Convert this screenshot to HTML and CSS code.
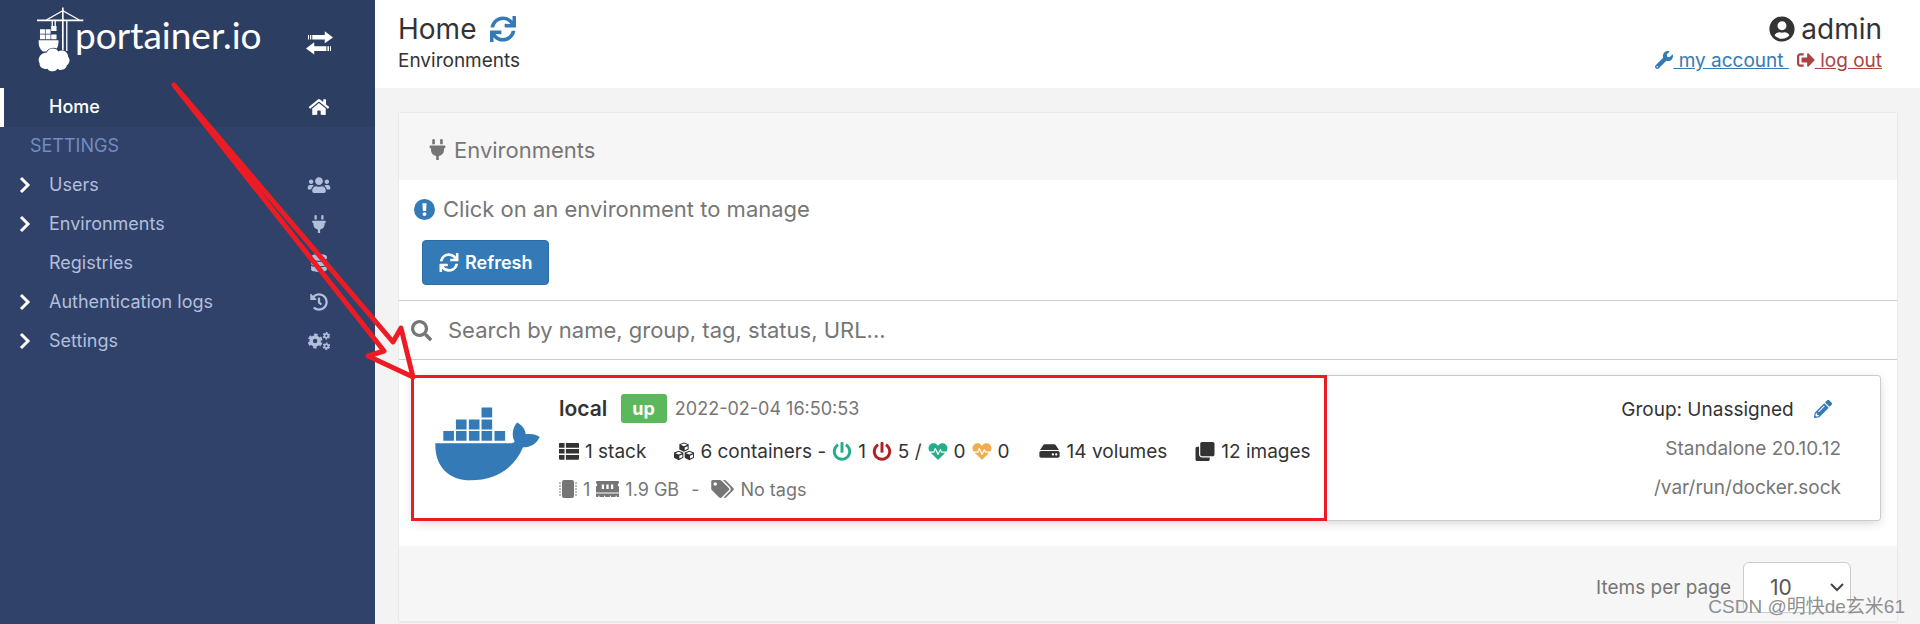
FILE: index.html
```
<!DOCTYPE html>
<html lang="en">
<head>
    <meta charset="UTF-8">
    <meta name="viewport" content="width=device-width, initial-scale=1.0">
    <title>Portainer</title>
    <link rel="stylesheet" href="styles.css">
</head>
<body>
    <!-- Icon set -->
    <svg class="icon-defs" aria-hidden="true">
        <symbol id="i-toggle" viewBox="0 0 82 72">
            <path d="M6 12h3v13H6zM12 12h4v13h-4zM19 12h38V0l25 19-25 18V25H19zM76 46h-3v14h3zM70 46h-5v14h5zM62 46H25V34L0 53l25 18V60h37z"/>
        </symbol>
        <symbol id="i-home" viewBox="0 0 576 512">
            <path d="M280.37 148.26L96 300.11V464a16 16 0 0 0 16 16l112.06-.29a16 16 0 0 0 15.92-16V368a16 16 0 0 1 16-16h64a16 16 0 0 1 16 16v95.64a16 16 0 0 0 16 16.05L464 480a16 16 0 0 0 16-16V300L295.67 148.26a12.19 12.19 0 0 0-15.3 0zM571.6 251.47L488 182.56V44.05a12 12 0 0 0-12-12h-56a12 12 0 0 0-12 12v72.61L318.47 43a48 48 0 0 0-61 0L4.34 251.47a12 12 0 0 0-1.6 16.9l25.5 31A12 12 0 0 0 45.15 301l235.22-193.74a12.19 12.19 0 0 1 15.3 0L530.9 301a12 12 0 0 0 16.9-1.6l25.5-31a12 12 0 0 0-1.7-16.93z"/>
        </symbol>
        <symbol id="i-users" viewBox="0 0 640 512">
            <path d="M96 224c35.3 0 64-28.7 64-64s-28.7-64-64-64-64 28.7-64 64 28.7 64 64 64zm448 0c35.3 0 64-28.7 64-64s-28.7-64-64-64-64 28.7-64 64 28.7 64 64 64zm32 32h-64c-17.6 0-33.5 7.1-45.1 18.6 40.3 22.1 68.9 62 75.1 109.4h66c17.7 0 32-14.3 32-32v-32c0-35.3-28.7-64-64-64zm-256 0c61.9 0 112-50.1 112-112S381.9 32 320 32 208 82.1 208 144s50.1 112 112 112zm76.8 32h-8.3c-20.8 10-43.9 16-68.5 16s-47.6-6-68.5-16h-8.3C179.6 288 128 339.6 128 403.2V432c0 26.5 21.5 48 48 48h288c26.5 0 48-21.5 48-48v-28.8c0-63.6-51.6-115.2-115.2-115.2zm-223.7-13.4C161.5 263.1 145.6 256 128 256H64c-35.3 0-64 28.7-64 64v32c0 17.7 14.3 32 32 32h65.9c6.3-47.4 34.9-87.3 75.2-109.4z"/>
        </symbol>
        <symbol id="i-plug" viewBox="0 0 384 512">
            <path d="M320 32a32 32 0 0 0-64 0v96h64zm48 128H16a16 16 0 0 0-16 16v32a16 16 0 0 0 16 16h16v32a160.07 160.07 0 0 0 128 156.8V512h64v-99.2A160.07 160.07 0 0 0 352 256v-32h16a16 16 0 0 0 16-16v-32a16 16 0 0 0-16-16zM128 32a32 32 0 0 0-64 0v96h64z"/>
        </symbol>
        <symbol id="i-database" viewBox="0 0 448 512">
            <path d="M448 73.143v45.714C448 159.143 347.667 192 224 192S0 159.143 0 118.857V73.143C0 32.857 100.333 0 224 0s224 32.857 224 73.143zM448 176v102.857C448 319.143 347.667 352 224 352S0 319.143 0 278.857V176c48.125 33.143 136.208 48.572 224 48.572S399.874 209.143 448 176zm0 160v102.857C448 479.143 347.667 512 224 512S0 479.143 0 438.857V336c48.125 33.143 136.208 48.572 224 48.572S399.874 369.143 448 336z"/>
        </symbol>
        <symbol id="i-history" viewBox="0 0 512 512">
            <path d="M504 255.531c.253 136.64-111.18 248.372-247.82 248.468-59.015.042-113.223-20.53-155.822-54.911-11.077-8.94-11.905-25.541-1.839-35.607l11.267-11.267c8.609-8.609 22.353-9.551 31.891-1.984C173.062 425.135 212.781 440 256 440c101.705 0 184-82.311 184-184 0-101.705-82.311-184-184-184-48.814 0-93.149 18.969-126.068 49.932l50.754 50.754c10.08 10.08 2.941 27.314-11.313 27.314H24c-8.837 0-16-7.163-16-16V38.627c0-14.254 17.234-21.393 27.314-11.314l49.372 49.372C129.209 34.136 189.552 8 256 8c136.81 0 247.747 110.78 248 247.531zm-180.912 78.784l9.823-12.63c8.138-10.463 6.253-25.542-4.21-33.679L288 256.349V152c0-13.255-10.745-24-24-24h-16c-13.255 0-24 10.745-24 24v135.651l65.409 50.874c10.463 8.137 25.541 6.253 33.679-4.21z"/>
        </symbol>
        <symbol id="i-cogs" viewBox="0 0 640 512">
            <g fill="none" stroke="currentColor">
                <circle cx="210" cy="256" r="115" stroke-width="100"/>
                <circle cx="210" cy="256" r="180" stroke-width="60" stroke-dasharray="100 88.5" stroke-dashoffset="-44"/>
                <circle cx="530" cy="108" r="54" stroke-width="46"/>
                <circle cx="530" cy="108" r="88" stroke-width="40" stroke-dasharray="52 40" stroke-dashoffset="-20"/>
                <circle cx="530" cy="404" r="54" stroke-width="46"/>
                <circle cx="530" cy="404" r="88" stroke-width="40" stroke-dasharray="52 40" stroke-dashoffset="-20"/>
            </g>
        </symbol>
        <symbol id="i-chevron" viewBox="0 0 12 18">
            <path d="M2 2l7 7-7 7" fill="none" stroke="currentColor" stroke-width="3"/>
        </symbol>
        <symbol id="i-sync" viewBox="0 0 512 512">
            <path d="M440.65 12.57l4 82.77A247.16 247.16 0 0 0 255.83 8C134.73 8 33.91 94.92 12.29 209.82A12 12 0 0 0 24.09 224h49.05a12 12 0 0 0 11.67-9.26 175.91 175.91 0 0 1 317-56.94l-101.46-4.86a12 12 0 0 0-12.57 12v47.41a12 12 0 0 0 12 12H500a12 12 0 0 0 12-12V12a12 12 0 0 0-12-12h-47.37a12 12 0 0 0-11.98 12.57zM255.83 432a175.61 175.61 0 0 1-146-77.8l101.8 4.87a12 12 0 0 0 12.57-12v-47.4a12 12 0 0 0-12-12H12a12 12 0 0 0-12 12V500a12 12 0 0 0 12 12h47.35a12 12 0 0 0 12-12.6l-4.15-82.57A247.17 247.17 0 0 0 255.83 504c121.11 0 221.93-86.92 243.55-201.82a12 12 0 0 0-11.8-14.18h-49.05a12 12 0 0 0-11.67 9.26A175.86 175.86 0 0 1 255.83 432z"/>
        </symbol>
        <symbol id="i-user" viewBox="0 0 496 512">
            <path d="M248 8C111 8 0 119 0 256s111 248 248 248 248-111 248-248S385 8 248 8zm0 96c48.6 0 88 39.4 88 88s-39.4 88-88 88-88-39.4-88-88 39.4-88 88-88zm0 344c-58.7 0-111.3-26.6-146.5-68.2 18.8-35.4 55.6-59.8 98.5-59.8 2.4 0 4.8.4 7.1 1.1 13 4.2 26.6 6.9 40.9 6.9 14.3 0 28-2.7 40.9-6.9 2.3-.7 4.7-1.1 7.1-1.1 42.9 0 79.7 24.4 98.5 59.8C359.3 421.4 306.7 448 248 448z"/>
        </symbol>
        <symbol id="i-wrench" viewBox="0 0 512 512">
            <path d="M507.73 109.1c-2.24-9.03-13.54-12.09-20.12-5.51l-74.36 74.36-67.88-11.31-11.31-67.88 74.36-74.36c6.62-6.62 3.43-17.9-5.66-20.16-47.38-11.74-99.55.91-136.58 37.93-39.64 39.64-50.55 97.1-34.05 147.2L18.74 402.76c-24.99 24.99-24.99 65.51 0 90.5 24.99 24.99 65.51 24.99 90.5 0l213.21-213.21c50.12 16.71 107.47 5.68 147.37-34.22 37.07-37.07 49.7-89.32 37.91-136.73zM64 472c-13.25 0-24-10.75-24-24 0-13.26 10.75-24 24-24s24 10.74 24 24c0 13.25-10.75 24-24 24z"/>
        </symbol>
        <symbol id="i-logout" viewBox="0 0 512 512">
            <path d="M497 273L329 441c-15 15-41 4.5-41-17v-96H152c-13.3 0-24-10.7-24-24v-96c0-13.3 10.7-24 24-24h136V88c0-21.4 25.9-32 41-17l168 168c9.3 9.4 9.3 24.6 0 34zM192 436v-40c0-6.6-5.4-12-12-12H96c-17.7 0-32-14.3-32-32V160c0-17.7 14.3-32 32-32h84c6.6 0 12-5.4 12-12V76c0-6.6-5.4-12-12-12H96c-53 0-96 43-96 96v192c0 53 43 96 96 96h84c6.6 0 12-5.4 12-12z"/>
        </symbol>
        <symbol id="i-info" viewBox="0 0 20 20">
            <path fill-rule="evenodd" d="M10 0a10 10 0 1 0 0 20 10 10 0 0 0 0-20zM8 4h4l-.5 7.500h-3zM10 12.500a1.900 1.900 0 1 1 0 3.800 1.900 1.900 0 0 1 0-3.800z"/>
        </symbol>
        <symbol id="i-search" viewBox="0 0 512 512">
            <path d="M505 442.7L405.3 343c-4.500-4.500-10.600-7-17-7H372c27.600-35.300 44-79.700 44-128C416 93.100 322.900 0 208 0S0 93.100 0 208s93.100 208 208 208c48.300 0 92.700-16.400 128-44v16.300c0 6.400 2.500 12.500 7 17l99.700 99.700c9.400 9.400 24.600 9.400 33.900 0l28.300-28.300c9.400-9.400 9.400-24.600.1-34zM208 336c-70.700 0-128-57.200-128-128 0-70.700 57.200-128 128-128 70.700 0 128 57.200 128 128 0 70.700-57.200 128-128 128z"/>
        </symbol>
        <symbol id="i-list" viewBox="0 0 58 50">
            <path d="M2 0h14v14H0V2zM20 0h36l2 2v12H20zM0 18h16v13H0zM20 18h38v13H20zM0 35h16v14H2l-2-2zM20 35h38v12l-2 2H20z"/>
        </symbol>
        <symbol id="i-cubes" viewBox="0 0 60 54">
            <path d="M30 0l14 5v16l-14 7-14-7V5zM14 25l14 5v16l-14 7-14-7V30zM46 25l14 5v16l-14 7-14-7V30z"/>
            <path d="M30 3l10 4-10 4-10-4zM14 28l10 4-10 4-10-4zM46 28l10 4-10 4-10-4zM32 15l9-4v8l-9 4zM16 40l9-4v8l-9 4zM48 40l9-4v8l-9 4z" fill="#fff"/>
        </symbol>
        <symbol id="i-power" viewBox="0 0 512 512">
            <path d="M400 54.100c63 45 104 118.600 104 201.900 0 136.800-110.800 247.700-247.500 248C120 504.300 8.200 393 8 256.400 7.900 173.100 48.900 99.300 111.800 54.200c11.700-8.300 28-4.800 35 7.700L162.600 90c5.900 10.500 3.100 23.800-6.600 31-41.500 30.800-68 79.600-68 134.900-.1 92.300 74.500 168.100 168 168.100 91.600 0 168.600-74.200 168-169.100-.3-51.800-24.700-101.800-68.100-134-9.700-7.200-12.400-20.500-6.500-30.900l15.800-28.100c7-12.400 23.200-16.100 34.800-7.800zM296 264V24c0-13.300-10.700-24-24-24h-32c-13.300 0-24 10.700-24 24v240c0 13.300 10.700 24 24 24h32c13.300 0 24-10.700 24-24z"/>
        </symbol>
        <symbol id="i-heart" viewBox="0 0 512 512">
            <path d="M320.2 243.8l-49.7 99.4c-6 12.1-23.4 11.7-28.9-.6l-56.9-126.3-30 71.7H60.6l182.5 186.5c7.1 7.3 18.6 7.3 25.7 0L451.4 288H342.3l-22.1-44.2zM473.7 73.9l-2.4-2.5c-51.5-52.6-135.8-52.6-187.4 0L256 100l-27.9-28.5c-51.5-52.7-135.9-52.7-187.4 0l-2.4 2.4C-10.4 123.7-12.5 203 31 256h102.4l35.9-86.2c5.4-12.9 23.6-13.1 29.3-.4l58.2 129.3 49-97.9c5.9-11.8 22.7-11.8 28.6 0l27.6 55.2H481c43.5-53 41.4-132.3-7.3-182.1z"/>
        </symbol>
        <symbol id="i-hdd" viewBox="0 0 576 512">
            <path d="M576 304v96c0 26.51-21.49 48-48 48H48c-26.51 0-48-21.49-48-48v-96c0-26.51 21.49-48 48-48h480c26.51 0 48 21.49 48 48zm-48-80a79.557 79.557 0 0 1 30.777 6.165L462.25 85.374A48.003 48.003 0 0 0 422.311 64H153.689a48 48 0 0 0-39.938 21.374L17.223 230.165A79.557 79.557 0 0 1 48 224h480zm-48 96c-17.673 0-32 14.327-32 32s14.327 32 32 32 32-14.327 32-32-14.327-32-32-32zm-96 0c-17.673 0-32 14.327-32 32s14.327 32 32 32 32-14.327 32-32-14.327-32-32-32z"/>
        </symbol>
        <symbol id="i-clone" viewBox="0 0 512 512">
            <path d="M464 0c26.51 0 48 21.49 48 48v288c0 26.51-21.49 48-48 48H176c-26.51 0-48-21.49-48-48V48c0-26.51 21.49-48 48-48h288M176 416c-44.112 0-80-35.888-80-80V128H48c-26.51 0-48 21.49-48 48v288c0 26.51 21.49 48 48 48h288c26.51 0 48-21.49 48-48v-48H176z"/>
        </symbol>
        <symbol id="i-chip" viewBox="0 0 18 18">
            <path d="M5 0h8a2 2 0 0 1 2 2v14a2 2 0 0 1-2 2H5a2 2 0 0 1-2-2V2a2 2 0 0 1 2-2z"/>
            <path d="M0 3h2M0 6h2M0 9h2M0 12h2M0 15h2M16 3h2M16 6h2M16 9h2M16 12h2M16 15h2" stroke="currentColor" stroke-width="1"/>
        </symbol>
        <symbol id="i-memory" viewBox="0 0 640 448">
            <path d="M640 67v-35c0-18-14-32-32-32H32C14 0 0 14 0 32v35c19 7 32 24 32 45s-13 38-32 45v163h640V157c-19-7-32-24-32-45s13-38 32-45zM224 224h-64V96h64zm128 0h-64V96h64zm128 0h-64V96h64zM0 448h64v-27a16 16 0 0 1 32 0v27h128v-27a16 16 0 0 1 32 0v27h128v-27a16 16 0 0 1 32 0v27h128v-27a16 16 0 0 1 32 0v27h64v-96H0z"/>
        </symbol>
        <symbol id="i-tags" viewBox="0 0 640 512">
            <path d="M497.941 225.941L286.059 14.059A48 48 0 0 0 252.118 0H48C21.49 0 0 21.49 0 48v204.118a48 48 0 0 0 14.059 33.941l211.882 211.882c18.744 18.745 49.136 18.746 67.882 0l204.118-204.118c18.745-18.745 18.745-49.137 0-67.882zM112 160c-26.51 0-48-21.49-48-48s21.49-48 48-48 48 21.49 48 48-21.49 48-48 48zm513.941 133.823L421.823 497.941c-18.745 18.745-49.137 18.745-67.882 0l-.36-.36L527.64 323.522c16.999-16.999 26.36-39.6 26.36-63.64s-9.362-46.641-26.36-63.64L331.397 0h48.721a48 48 0 0 1 33.941 14.059l211.882 211.882c18.745 18.745 18.745 49.137 0 67.882z"/>
        </symbol>
        <symbol id="i-pencil" viewBox="0 0 512 512">
            <path d="M497.9 142.1l-46.1 46.1c-4.7 4.7-12.3 4.7-17 0l-111-111c-4.7-4.7-4.7-12.3 0-17l46.1-46.1c18.7-18.7 49.1-18.7 67.900 0l60.1 60.1c18.8 18.7 18.8 49.1 0 67.9zM284.2 99.8L21.6 362.4.4 483.9c-2.9 16.4 11.4 30.6 27.800 27.800l121.5-21.3 262.6-262.6c4.7-4.7 4.7-12.3 0-17l-111-111c-4.8-4.7-12.4-4.7-17.1 0zM124.1 339.9c-5.5-5.5-5.5-14.3 0-19.8l154-154c5.5-5.5 14.3-5.5 19.8 0s5.5 14.3 0 19.8l-154 154c-5.5 5.5-14.3 5.5-19.8 0zM88 424h48v36.3l-64.5 11.3-31.1-31.1L51.7 376H88v48z"/>
        </symbol>
    </svg>

    <div class="page">
        <nav class="sidebar">
            <div class="sidebar-header">
                <a class="logo" href="#">
                    <svg class="logo-crane" viewBox="0 0 142 194" aria-hidden="true">
                        <g fill="none" stroke="#fff" stroke-width="5">
                            <path d="M78 0v130M0 39h140"/>
                            <path d="M28 38L78 10l50 28M90 40v92M55 40v20M46 40v24" stroke-width="4"/>
                        </g>
                        <path d="M43 56h16v15H43zM9 66h15v14H9zM26 66h15v14H26zM9 82h15v14H9zM26 82h15v14H26zM43 82h16v14H43zM5 99h60c0 20-4 26-14 34H18C8 126 4 115 5 99z"/>
                        <path d="M30 136c4-14 28-16 34-3 14-8 30 0 30 16 8 8 4 22-4 26-2 14-20 18-28 10-8 12-26 10-30 0-14 4-26-6-24-16-8-12 0-32 22-33z" stroke="#2d3e63" stroke-width="4" paint-order="stroke"/>
                    </svg>
                    <span class="logo-text">portainer.io</span>
                </a>
                <button class="toggle" type="button" aria-label="Toggle sidebar"><svg class="icon-toggle"><use href="#i-toggle"/></svg></button>
            </div>
            <ul class="menu">
                <li class="active"><a href="#">Home<svg class="icon"><use href="#i-home"/></svg></a></li>
                <li class="title">SETTINGS</li>
                <li><svg class="chevron"><use href="#i-chevron"/></svg><a href="#">Users<svg class="icon"><use href="#i-users"/></svg></a></li>
                <li><svg class="chevron"><use href="#i-chevron"/></svg><a href="#">Environments<svg class="icon"><use href="#i-plug"/></svg></a></li>
                <li><a href="#">Registries<svg class="icon"><use href="#i-database"/></svg></a></li>
                <li><svg class="chevron"><use href="#i-chevron"/></svg><a href="#">Authentication logs<svg class="icon"><use href="#i-history"/></svg></a></li>
                <li><svg class="chevron"><use href="#i-chevron"/></svg><a href="#">Settings<svg class="icon"><use href="#i-cogs"/></svg></a></li>
            </ul>
        </nav>

        <main class="content">
            <header class="header">
                <div>
                    <h1>Home <a href="#" aria-label="Reload"><svg class="icon-lg"><use href="#i-sync"/></svg></a></h1>
                    <div class="breadcrumb">Environments</div>
                </div>
                <div class="user-box">
                    <div class="user-name"><svg class="icon-lg"><use href="#i-user"/></svg>admin</div>
                    <div class="user-links">
                        <a class="account" href="#"><svg class="icon"><use href="#i-wrench"/></svg>&nbsp;my account&nbsp;</a>
                        <a class="logout" href="#"><svg class="icon"><use href="#i-logout"/></svg>&nbsp;log out</a>
                    </div>
                </div>
            </header>

            <section class="widget">
                <h2 class="widget-header"><svg class="icon-md"><use href="#i-plug"/></svg>Environments</h2>
                <div class="actions">
                    <p class="hint"><svg class="icon-md"><use href="#i-info"/></svg>Click on an environment to manage</p>
                    <button class="btn" type="button"><svg class="icon"><use href="#i-sync"/></svg>Refresh</button>
                </div>
                <div class="search">
                    <label for="search"><svg class="icon-md"><use href="#i-search"/></svg></label>
                    <input type="text" id="search" aria-label="Search" placeholder="Search by name, group, tag, status, URL...">
                </div>
                <div class="list">
                    <div class="env">
                        <svg class="docker" viewBox="0 0 316 220" aria-hidden="true">
                            <path d="M140 0h32v30h-32zM63 36h32v30H63zM102 36h32v30h-32zM140 36h32v30h-32zM25 71h32v29H25zM63 71h32v29H63zM102 71h32v29h-32zM140 71h32v29h-32zM179 71h32v29h-32z"/>
                            <path d="M1 108h222c7 0 13-2 17-5-11-19-6-43 7-58 15 8 25 20 26 36 16-3 32 0 42 8-9 20-27 31-50 31-26 62-82 99-158 99-66 0-108-42-106-111z"/>
                        </svg>
                        <div class="env-main">
                            <div class="row">
                                <strong class="env-name">local</strong>
                                <span class="label">up</span>
                                <span class="muted">2022-02-04 16:50:53</span>
                            </div>
                            <div class="row stats">
                                <span class="stat"><svg class="icon"><use href="#i-list"/></svg>1 stack</span>
                                <span class="stat">
                                    <svg class="icon"><use href="#i-cubes"/></svg>6 containers -
                                    <svg class="icon green"><use href="#i-power"/></svg>1
                                    <svg class="icon red"><use href="#i-power"/></svg>5 /
                                    <svg class="icon green"><use href="#i-heart"/></svg>0
                                    <svg class="icon orange"><use href="#i-heart"/></svg>0
                                </span>
                                <span class="stat"><svg class="icon-wide"><use href="#i-hdd"/></svg>14 volumes</span>
                                <span class="stat"><svg class="icon"><use href="#i-clone"/></svg>12 images</span>
                            </div>
                            <div class="row specs muted">
                                <span class="stat"><svg class="icon-chip"><use href="#i-chip"/></svg>1 <svg class="icon-wide"><use href="#i-memory"/></svg>1.9 GB</span>
                                <span class="dash">-</span>
                                <span class="stat"><svg class="icon-wide"><use href="#i-tags"/></svg>No tags</span>
                            </div>
                        </div>
                        <div class="env-side">
                            <div class="group">Group: Unassigned <a href="#" aria-label="Edit"><svg class="icon"><use href="#i-pencil"/></svg></a></div>
                            <div class="muted">Standalone 20.10.12</div>
                            <div class="muted">/var/run/docker.sock</div>
                        </div>
                        <div class="highlight"></div>
                    </div>
                </div>
                <footer class="footer">
                    <label for="limit">Items per page</label>
                    <span class="select-wrap">
                        <select id="limit">
                            <option>10</option>
                            <option>25</option>
                            <option>50</option>
                        </select>
                        <svg class="caret" viewBox="0 0 14 9" aria-hidden="true"><path d="M1 1l6 6 6-6"/></svg>
                    </span>
                </footer>
            </section>
        </main>
    </div>

    <!-- Arrow drawn over the page -->
    <svg class="arrow" viewBox="0 0 420 400" aria-hidden="true">
        <path d="M174 85L384 351l-16 5 45 21-12-49-8 14z"/>
    </svg>
    <div class="watermark">CSDN @明快de玄米61</div>
</body>
</html>
```
FILE: styles.css
```
* {
    box-sizing: border-box;
}
body {
    margin: 0;
    font-family: Inter, "Noto Sans CJK SC", sans-serif;
    font-size: 18px;
    color: #333;
    background-color: #f3f3f3;
}
a {
    color: #337ab7;
}
svg {
    fill: currentColor;
    flex: none;
}
.icon-defs {
    display: none;
}
.icon {
    width: 20px;
    height: 19px;
}
.icon-chip {
    width: 18px;
    height: 18px;
}
.icon-wide {
    width: 23px;
    height: 18px;
}
.icon-md {
    width: 21px;
    height: 21px;
}
.icon-lg {
    width: 26px;
    height: 26px;
}
.page {
    display: flex;
    min-height: 100vh;
}

/* Sidebar */
.sidebar {
    width: 375px;
    flex: none;
    background-color: #30426a;
}
.sidebar-header {
    display: flex;
    justify-content: space-between;
    height: 88px;
    padding: 7px 42px 0 37px;
    background-color: #2d3e63;
}
.logo {
    display: flex;
    color: #fff;
    text-decoration: none;
}
.logo-crane {
    width: 47px;
    height: 65px;
}
.logo-text {
    margin: 6px 0 0 -9px;
    font-family: Lato, sans-serif;
    font-size: 37px;
    line-height: 44px;
}
.toggle {
    padding: 0 0 9px;
    align-self: center;
    border: 0;
    background: none;
    color: #fff;
}
.icon-toggle {
    display: block;
    width: 27px;
    height: 24px;
}
.menu {
    list-style-type: none;
    margin: 0;
    padding: 0;
}
.menu li {
    display: flex;
    align-items: center;
    height: 39px;
    padding: 0 0 2px 19px;
}
.menu a {
    display: flex;
    flex: 1;
    justify-content: space-between;
    align-items: center;
    padding-right: 44px;
    color: #b2bfdc;
    text-decoration: none;
}
.menu li > a:first-child {
    padding-left: 30px;
}
.menu .icon {
    width: 24px;
    height: 18px;
}
.menu .active {
    padding-left: 15px;
    border-left: 4px solid #fff;
    background-color: #2d3e63;
}
.menu .active a {
    color: #fff;
    font-weight: 500;
}
.menu .title {
    padding-left: 30px;
    color: #738bc0;
}
.chevron {
    width: 12px;
    height: 18px;
    margin-right: 18px;
    color: #fff;
}

/* Top bar */
.content {
    flex: 1;
    min-width: 0;
}
.header {
    display: flex;
    justify-content: space-between;
    height: 88px;
    padding: 11px 38px 0 23px;
    font-size: 19px;
    background-color: #fff;
}
h1,
.user-name {
    display: flex;
    align-items: center;
    gap: 6px;
    height: 36px;
    margin: 0;
    font-size: 28px;
    font-weight: 400;
}
h1 {
    gap: 14px;
}
h1 a {
    display: flex;
}
.user-name {
    justify-content: flex-end;
}
.breadcrumb,
.user-links {
    line-height: 28px;
}
.user-links .icon {
    width: 18px;
    height: 18px;
    vertical-align: -2px;
}
.user-links {
    display: flex;
    gap: 8px;
}
.logout {
    color: #a94442;
}

/* Environments widget */
.widget {
    margin: 24px 22px 0 23px;
    border: 1px solid #e9e9e9;
    border-bottom-width: 2px;
    border-radius: 3px;
    background-color: #fff;
}
.widget-header {
    display: flex;
    align-items: center;
    gap: 6px;
    height: 67px;
    margin: 0;
    padding: 6px 28px 0;
    font-size: 22px;
    font-weight: 400;
    color: #767676;
    background-color: #f6f6f6;
}
.actions {
    padding: 15px 15px 15px;
}
.hint {
    display: flex;
    align-items: center;
    gap: 8px;
    height: 28px;
    margin: 0 0 17px;
    font-size: 22px;
    color: #767676;
}
.hint svg {
    color: #337ab7;
}
.btn {
    display: flex;
    align-items: center;
    gap: 6px;
    height: 45px;
    margin-left: 8px;
    padding: 0 16px;
    border: 1px solid #2e6da4;
    border-radius: 4px;
    font: 600 18px Inter, sans-serif;
    color: #fff;
    background-color: #337ab7;
}
.search {
    display: flex;
    align-items: center;
    height: 60px;
    padding: 0 12px;
    border: 1px solid #ccc;
    border-width: 1px 0;
    color: #767676;
}
.search label {
    display: flex;
    width: 37px;
}
.search input {
    flex: 1;
    padding: 0;
    border: 0;
    font: 22px Inter, sans-serif;
}
.search input::placeholder {
    color: #767676;
}
.list {
    padding: 15px 16px 25px 13px;
}
.env {
    position: relative;
    display: flex;
    height: 146px;
    padding: 14px 39px 0 22px;
    border: 1px solid #ccc;
    border-radius: 3px;
    box-shadow: 0 3px 12px -2px rgba(0, 0, 0, 0.2);
}
.docker {
    width: 105px;
    height: 74px;
    margin: 17px 19px 0 0;
    color: #337ab7;
}
.env-main {
    flex: 1;
}
.row {
    display: flex;
    align-items: center;
    height: 36px;
}
.stats {
    gap: 28px;
    height: 50px;
    font-size: 19px;
}
.specs {
    height: 26px;
}
.stat {
    display: flex;
    align-items: center;
    gap: 6px;
}
.env-name {
    margin-right: 14px;
    font-size: 21px;
    font-weight: 600;
}
.label {
    margin-right: 8px;
    padding: 0 12px 0 11px;
    border-radius: 3px;
    font-weight: 700;
    line-height: 29px;
    color: #fff;
    background-color: #5cb85c;
}
.muted {
    color: #767676;
}
.dash {
    margin: 0 12px;
}
.green {
    color: #23ae89;
}
.red {
    color: #ae2323;
}
.orange {
    color: #f0ad4e;
}
.env-side {
    font-size: 19px;
    line-height: 39px;
    text-align: right;
}
.group {
    margin-right: 8px;
}
.group svg {
    height: 18px;
    margin-left: 14px;
    vertical-align: -2px;
}
.highlight {
    position: absolute;
    top: -1px;
    bottom: -1px;
    left: -2px;
    width: 916px;
    border: 3px solid #ed1c24;
}
.footer {
    display: flex;
    align-items: center;
    justify-content: flex-end;
    gap: 12px;
    height: 75px;
    padding: 8px 46px 0 0;
    font-size: 19px;
    color: #767676;
    background-color: #f6f6f6;
}
.select-wrap {
    position: relative;
}
.footer select {
    display: block;
    width: 108px;
    height: 51px;
    padding: 0 0 0 26px;
    border: 1px solid #ccc;
    border-radius: 6px;
    appearance: none;
    font: 21px Inter, sans-serif;
    color: #555;
    background-color: #fff;
}
.caret {
    position: absolute;
    top: 21px;
    right: 7px;
    width: 14px;
    height: 9px;
    fill: none;
    stroke: #444;
    stroke-width: 2px;
    pointer-events: none;
}

/* Overlays */
.arrow {
    position: absolute;
    top: 0;
    left: 0;
    width: 420px;
    height: 400px;
    pointer-events: none;
}
.arrow path {
    fill: none;
    stroke: #ed1c24;
    stroke-width: 5;
    stroke-linejoin: round;
}
.watermark {
    position: absolute;
    right: 15px;
    bottom: 6px;
    font-family: "Liberation Sans", "Noto Sans CJK SC", sans-serif;
    font-size: 19px;
    color: #8f8f8f;
}
```
